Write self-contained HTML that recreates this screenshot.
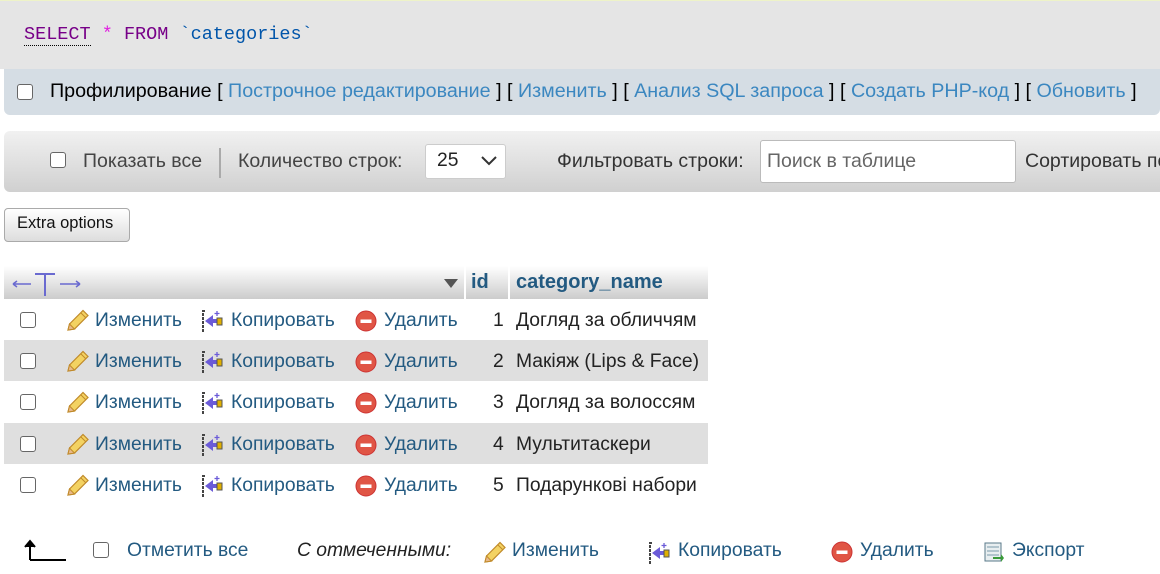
<!DOCTYPE html>
<html><head><meta charset="utf-8"><style>
*{margin:0;padding:0;box-sizing:border-box}
body{width:1160px;height:574px;overflow:hidden;background:#fff;font-family:"Liberation Sans",Arial,sans-serif;font-size:19.3px;color:#222;position:relative}
.a{position:absolute;white-space:nowrap}
.l{color:#235a81}
.cb{position:absolute;width:16px;height:16px;border:1.5px solid #666;border-radius:3px;background:#fff}
.row{position:absolute;left:4px;width:704px;height:41px}
.g{background:#dfdfdf}
</style></head><body>
<div class="a" style="left:0;top:0;width:1160px;height:69px;background:#e5e5e5;border-top:1px solid #eef3c8"></div>
<div class="a" style="left:24px;top:24px;font-family:'Liberation Mono',monospace;font-size:18.5px"><span style="color:#770088;border-bottom:1px dotted #000">SELECT</span> <span style="color:#e020e0">*</span> <span style="color:#770088">FROM</span> <span style="color:#0055aa">`categories`</span></div>
<div class="a" style="left:4px;top:69px;width:1156px;height:46px;background:#d5dde4;border-radius:0 0 6px 6px"></div>
<div class="cb" style="left:17px;top:84px"></div>
<div class="a" style="left:50px;top:80px;font-size:19.7px;color:#000">Профилирование [ <span style="color:#3b87c0">Построчное редактирование</span> ] [ <span style="color:#3b87c0">Изменить</span> ] [ <span style="color:#3b87c0">Анализ SQL запроса</span> ] [ <span style="color:#3b87c0">Создать PHP-код</span> ] [ <span style="color:#3b87c0">Обновить</span> ]</div>
<div class="a" style="left:4px;top:131px;width:1160px;height:61px;background:linear-gradient(#f1f1f1,#d0d0d0);border-radius:6px 0 0 6px"></div>
<div class="cb" style="left:50px;top:152px"></div>
<div class="a" style="left:83px;top:150px;color:#444;font-size:19.5px">Показать все</div>
<div class="a" style="left:219px;top:148px;width:2px;height:30px;background:#aaa"></div>
<div class="a" style="left:238px;top:150px;color:#444;font-size:19.5px">Количество строк:</div>
<div class="a" style="left:425px;top:144px;width:81px;height:35px;background:#fff;border:1px solid #ccc;border-radius:3px"></div>
<div class="a" style="left:437px;top:150px">25</div>
<svg class="a" style="left:480px;top:154px" width="18" height="12"><path d="M2 3l7 7 7-7" stroke="#333" stroke-width="2" fill="none"/></svg>
<div class="a" style="left:557px;top:150px;color:#333;font-size:19.5px">Фильтровать строки:</div>
<div class="a" style="left:760px;top:140px;width:256px;height:43px;background:#fff;border:1px solid #bbb;border-radius:3px"></div>
<div class="a" style="left:767px;top:150px;color:#666;font-size:19.5px">Поиск в таблице</div>
<div class="a" style="left:1025px;top:150px;color:#333;font-size:19.5px">Сортировать по</div>
<div class="a" style="left:4px;top:208px;width:126px;height:34px;background:linear-gradient(#fff,#ddd);border:1px solid #aaa;border-radius:4px"></div>
<div class="a" style="left:17px;top:214px;font-size:16.5px;color:#111">Extra options</div>
<div class="a" style="left:4px;top:266px;width:704px;height:33px;background:linear-gradient(#fff,#ccc)"></div>
<div class="a" style="left:464px;top:266px;width:2px;height:33px;background:#fff"></div>
<div class="a" style="left:508px;top:266px;width:2px;height:33px;background:#fff"></div>
<svg class="a" style="left:12px;top:270px" width="72" height="28"><path d="M1 14h18M1 14l4-3M1 14l4 3" stroke="#6a6ad0" stroke-width="1.5" fill="none"/><path d="M23 4h20M33 4v22" stroke="#6a6ad0" stroke-width="2" fill="none"/><path d="M48 14h20M68 14l-4-3M68 14l-4 3" stroke="#6a6ad0" stroke-width="1.5" fill="none"/></svg>
<svg class="a" style="left:443px;top:277px" width="16" height="12"><path d="M1 2h14l-7 9z" fill="#555"/></svg>
<div class="a" style="left:471px;top:271px;color:#235a81;font-weight:bold;font-size:20px">id</div>
<div class="a" style="left:516px;top:271px;color:#235a81;font-weight:bold;font-size:20px">category_name</div>

<div class="row" style="top:299px"></div>
<div class="row g" style="top:340px"></div>
<div class="row" style="top:381px"></div>
<div class="row g" style="top:423px"></div>
<div class="row" style="top:464px"></div>

<svg width="0" height="0" style="position:absolute"><defs>
<g id="pen"><path d="M2 21l1.5-6L17 1.5l5 5L8.5 20z" fill="#f3d262" stroke="#c08a2a" stroke-width="1.2"/><path d="M2 21l1.5-6 5 5z" fill="#e9b98a" stroke="#c08a2a" stroke-width="1"/><path d="M15 4l5 5" stroke="#c08a2a"/></g>
<g id="cp"><path d="M4 2h-2v20h2" stroke="#444" stroke-width="2" fill="none" stroke-dasharray="3 1"/><path d="M4 12l8-6v4h4v4h-4v4z" fill="#6b5bd8"/><rect x="16" y="9" width="5" height="7" fill="#e0b000" stroke="#555"/><path d="M16 2v5M13.5 4.5h5" stroke="#6b5bd8" stroke-width="1.3"/></g>
<g id="del"><circle cx="11" cy="11" r="10" fill="#e05545" stroke="#c33" /><rect x="5.5" y="9.5" width="11" height="3.5" fill="#fff"/></g>
</defs></svg>

<div class="cb" style="left:20px;top:312px"></div><svg class="a" style="left:66px;top:309px" width="24" height="24"><use href="#pen"/></svg><div class="a l" style="left:95px;top:310px">Изменить</div><svg class="a" style="left:201px;top:309px" width="24" height="24"><use href="#cp"/></svg><div class="a l" style="left:231px;top:310px">Копировать</div><svg class="a" style="left:355px;top:310px" width="24" height="24"><use href="#del"/></svg><div class="a l" style="left:384px;top:310px">Удалить</div><div class="a" style="left:493px;top:310px">1</div><div class="a" style="left:516px;top:310px">Догляд за обличчям</div>
<div class="cb" style="left:20px;top:353px"></div><svg class="a" style="left:66px;top:350px" width="24" height="24"><use href="#pen"/></svg><div class="a l" style="left:95px;top:351px">Изменить</div><svg class="a" style="left:201px;top:350px" width="24" height="24"><use href="#cp"/></svg><div class="a l" style="left:231px;top:351px">Копировать</div><svg class="a" style="left:355px;top:351px" width="24" height="24"><use href="#del"/></svg><div class="a l" style="left:384px;top:351px">Удалить</div><div class="a" style="left:493px;top:351px">2</div><div class="a" style="left:516px;top:351px">Макіяж (Lips &amp; Face)</div>
<div class="cb" style="left:20px;top:394px"></div><svg class="a" style="left:66px;top:391px" width="24" height="24"><use href="#pen"/></svg><div class="a l" style="left:95px;top:392px">Изменить</div><svg class="a" style="left:201px;top:391px" width="24" height="24"><use href="#cp"/></svg><div class="a l" style="left:231px;top:392px">Копировать</div><svg class="a" style="left:355px;top:392px" width="24" height="24"><use href="#del"/></svg><div class="a l" style="left:384px;top:392px">Удалить</div><div class="a" style="left:493px;top:392px">3</div><div class="a" style="left:516px;top:392px">Догляд за волоссям</div>
<div class="cb" style="left:20px;top:436px"></div><svg class="a" style="left:66px;top:433px" width="24" height="24"><use href="#pen"/></svg><div class="a l" style="left:95px;top:434px">Изменить</div><svg class="a" style="left:201px;top:433px" width="24" height="24"><use href="#cp"/></svg><div class="a l" style="left:231px;top:434px">Копировать</div><svg class="a" style="left:355px;top:434px" width="24" height="24"><use href="#del"/></svg><div class="a l" style="left:384px;top:434px">Удалить</div><div class="a" style="left:493px;top:434px">4</div><div class="a" style="left:516px;top:434px">Мультитаскери</div>
<div class="cb" style="left:20px;top:477px"></div><svg class="a" style="left:66px;top:474px" width="24" height="24"><use href="#pen"/></svg><div class="a l" style="left:95px;top:475px">Изменить</div><svg class="a" style="left:201px;top:474px" width="24" height="24"><use href="#cp"/></svg><div class="a l" style="left:231px;top:475px">Копировать</div><svg class="a" style="left:355px;top:475px" width="24" height="24"><use href="#del"/></svg><div class="a l" style="left:384px;top:475px">Удалить</div><div class="a" style="left:493px;top:475px">5</div><div class="a" style="left:516px;top:475px">Подарункові набори</div>

<svg class="a" style="left:22px;top:538px" width="46" height="24"><path d="M8 22V4M3 9l5-6 5 6" stroke="#000" stroke-width="2" fill="#000"/><path d="M8 22h36" stroke="#000" stroke-width="2"/></svg>
<div class="cb" style="left:93px;top:542px"></div>
<div class="a l" style="left:127px;top:540px">Отметить все</div>
<div class="a" style="left:297px;top:540px;font-style:italic">С отмеченными:</div>
<svg class="a" style="left:483px;top:541px" width="24" height="24"><use href="#pen"/></svg><div class="a l" style="left:512px;top:540px">Изменить</div>
<svg class="a" style="left:648px;top:541px" width="24" height="24"><use href="#cp"/></svg><div class="a l" style="left:678px;top:540px">Копировать</div>
<svg class="a" style="left:831px;top:541px" width="24" height="24"><use href="#del"/></svg><div class="a l" style="left:860px;top:540px">Удалить</div>
<svg class="a" style="left:983px;top:541px" width="24" height="24"><rect x="2" y="2" width="16" height="18" fill="#e8eef0" stroke="#5a7a8a"/><path d="M4 6h12M4 10h12M4 14h12" stroke="#7a9aaa"/><path d="M10 16h8v-3l3 4-3 4v-3h-8z" fill="#3a9a3a"/></svg><div class="a l" style="left:1012px;top:540px">Экспорт</div>
</body></html>
